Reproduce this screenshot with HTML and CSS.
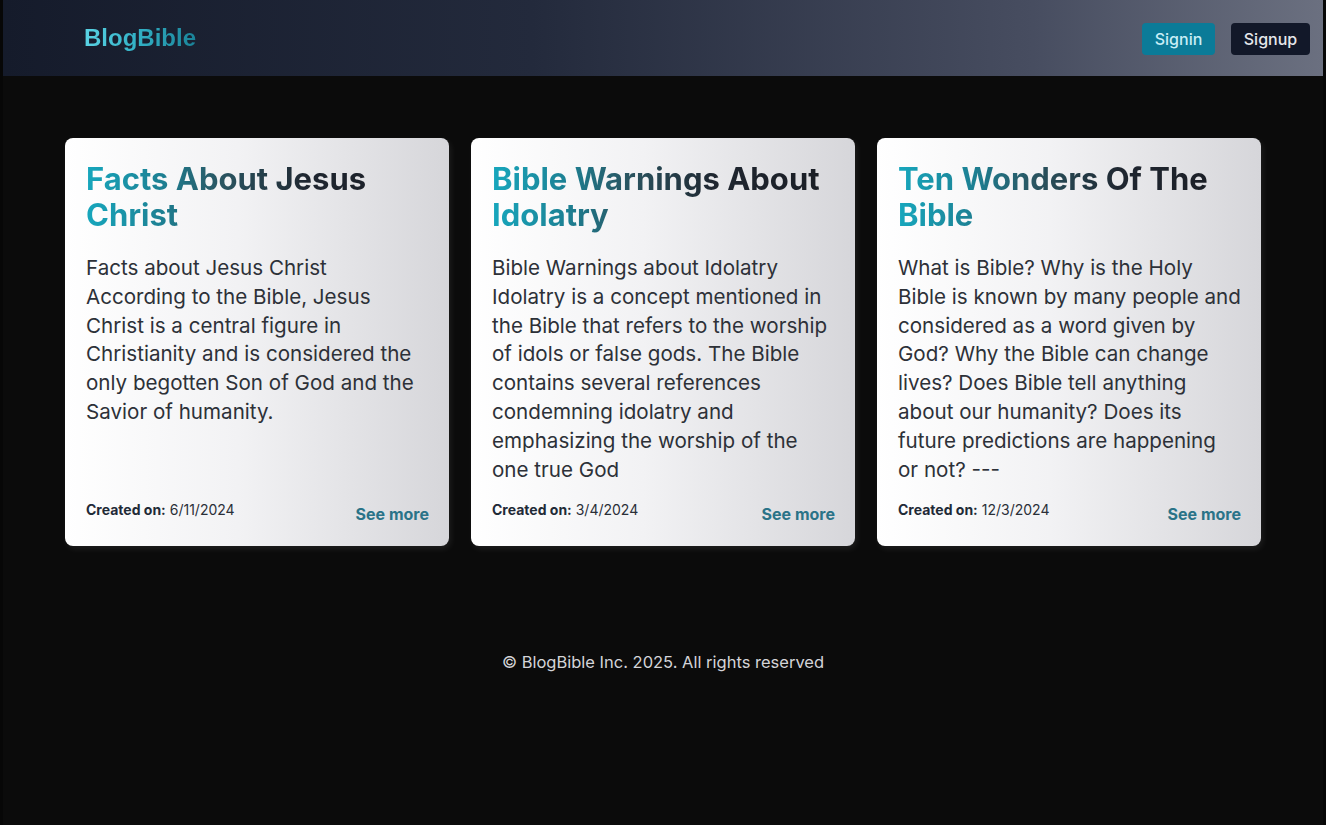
FILE: index.html
```html
<!DOCTYPE html>
<html lang="en">
<head>
<meta charset="utf-8">
<title>BlogBible</title>
<link rel="stylesheet" href="styles.css">
</head>
<body>
<div class="page">
  <header class="topbar">
    <a class="logo" href="#">BlogBible</a>
    <nav class="actions">
      <button class="btn btn-signin">Signin</button>
      <button class="btn btn-signup">Signup</button>
    </nav>
  </header>

  <main class="cards">
    <article class="card">
      <h2 class="card-title">Facts About Jesus Christ</h2>
      <p class="card-text">Facts about Jesus Christ According to the Bible, Jesus Christ is a central figure in Christianity and is considered the only begotten Son of God and the Savior of humanity.</p>
      <div class="card-foot">
        <span class="created"><b>Created on:</b> 6/11/2024</span>
        <a class="more" href="#">See more</a>
      </div>
    </article>
    <article class="card">
      <h2 class="card-title">Bible Warnings About Idolatry</h2>
      <p class="card-text">Bible Warnings about Idolatry Idolatry is a concept mentioned in the Bible that refers to the worship of idols or false gods. The Bible contains several references condemning idolatry and emphasizing the worship of the one true God</p>
      <div class="card-foot">
        <span class="created"><b>Created on:</b> 3/4/2024</span>
        <a class="more" href="#">See more</a>
      </div>
    </article>
    <article class="card">
      <h2 class="card-title">Ten Wonders Of The Bible</h2>
      <p class="card-text">What is Bible? Why is the Holy Bible is known by many people and considered as a word given by God? Why the Bible can change lives? Does Bible tell anything about our humanity? Does its future predictions are happening or not? ---</p>
      <div class="card-foot">
        <span class="created"><b>Created on:</b> 12/3/2024</span>
        <a class="more" href="#">See more</a>
      </div>
    </article>
  </main>

  <footer class="footer">© BlogBible Inc. 2025. All rights reserved</footer>
</div>
</body>
</html>
```

FILE: styles.css
```css
* { box-sizing: border-box; }
html, body { margin: 0; padding: 0; }
body {
  background: #0a0a0a;
  font-family: Inter, "Noto Sans", Arial, sans-serif;
  color: #e5e7eb;
}
.page {
  min-height: 825px;
  border-left: 3px solid #070707;
  border-right: 3px solid #070707;
  background: #0b0b0b;
}
.topbar {
  height: 76px;
  display: flex;
  align-items: center;
  justify-content: space-between;
  padding: 0 13px 0 81px;
  background: linear-gradient(90deg, #151b2b 0%, #232a3c 40%, #474d60 78%, #6b7080 100%);
}
.logo {
  font-family: "Liberation Sans", Arial, sans-serif;
  font-size: 24px;
  font-weight: 700;
  text-decoration: none;
  background: linear-gradient(90deg, #5ad3e4 0%, #34b3c8 45%, #1a8399 100%);
  -webkit-background-clip: text;
  background-clip: text;
  color: transparent;
  margin-top: 0;
}
.actions { display: flex; gap: 16px; margin-top: 1px; }
.btn {
  font-family: inherit;
  font-size: 16px;
  font-weight: 500;
  height: 32px;
  padding: 0 10px;
  border: none;
  border-radius: 4px;
  cursor: pointer;
}
.btn-signin { background: #0b7b98; color: #c8eef6; width: 73px; }
.btn-signup { background: #121829; color: #e5e7eb; width: 79px; }

.cards {
  display: grid;
  grid-template-columns: repeat(3, 384px);
  gap: 22px;
  justify-content: center;
  padding-top: 62px;
}
.card {
  display: flex;
  flex-direction: column;
  min-height: 408px;
  padding: 23px 20px 22px 21px;
  border-radius: 8px;
  background: linear-gradient(90deg, #ffffff 0%, #f2f2f4 45%, #d6d6da 100%);
  box-shadow: 2px 3px 6px rgba(255,255,255,0.08);
}
.card-title {
  margin: 0;
  font-size: 31px;
  line-height: 36px;
  font-weight: 700;
  background: linear-gradient(90deg, #17a7bd 0%, #1d8093 22%, #2a5460 40%, #1f2630 65%, #1a1d24 100%);
  -webkit-background-clip: text;
  background-clip: text;
  color: transparent;
}
.card-text {
  margin: 21px 0 0;
  flex: 1;
  font-size: 20.6px;
  line-height: 28.8px;
  color: #2d3138;
}
.card-foot {
  display: flex;
  justify-content: space-between;
  align-items: flex-end;
}
.created { font-size: 14px; color: #2a2f38; padding-bottom: 6px; }
.created b { font-weight: 700; color: #1f2a37; }
.more {
  font-size: 16px;
  font-weight: 700;
  color: #2a7388;
  text-decoration: none;
  margin-bottom: 0;
}
.footer {
  text-align: center;
  padding-top: 106px;
  font-size: 16.5px;
  color: #d4d4d8;
}
```
